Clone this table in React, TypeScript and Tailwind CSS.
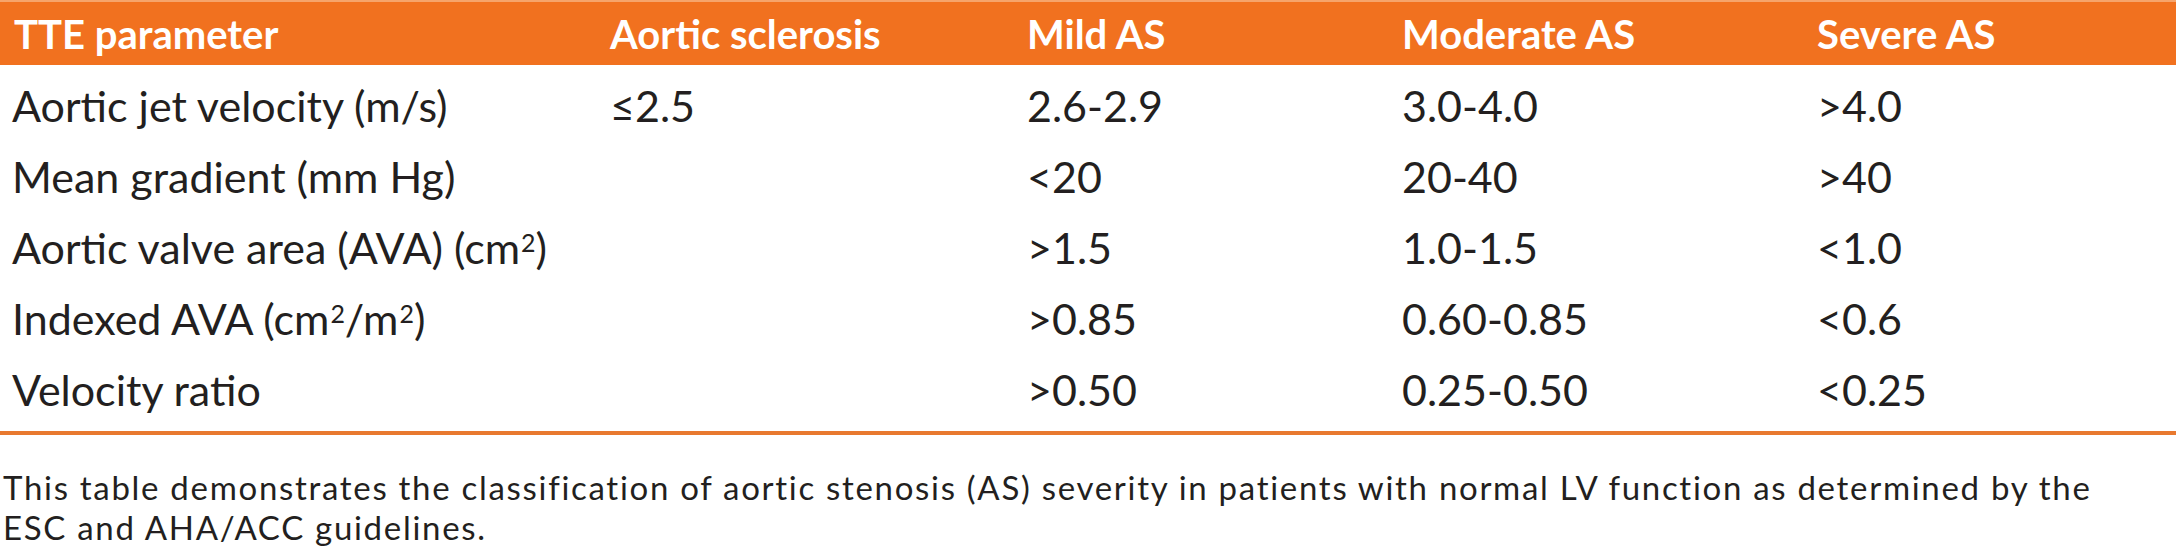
const headers = ["TTE parameter", "Aortic sclerosis", "Mild AS", "Moderate AS", "Severe AS"]

const Sup = ({ children }: { children: React.ReactNode }) => (
  <sup className="text-[0.58em] relative -top-[0.5em] pl-[1px]">{children}</sup>
)

const rows: React.ReactNode[][] = [
  ["Aortic jet velocity (m/s)", "≤2.5", "2.6-2.9", "3.0-4.0", ">4.0"],
  ["Mean gradient (mm Hg)", "", "<20", "20-40", ">40"],
  [<>Aortic valve area (AVA) (cm<Sup>2</Sup>)</>, "", ">1.5", "1.0-1.5", "<1.0"],
  [<>Indexed AVA (cm<Sup>2</Sup>/m<Sup>2</Sup>)</>, "", ">0.85", "0.60-0.85", "<0.6"],
  ["Velocity ratio", "", ">0.50", "0.25-0.50", "<0.25"],
]

// column starts: 0, 610, 1027, 1402, 1817
const gridClass = "grid grid-cols-[610px_417px_375px_415px_359px]"

export default function App() {
  return (
    <div className="w-[2176px] h-[552px] bg-white overflow-hidden text-[#231f20]" style={{ fontFamily: "Lato, 'Noto Sans', sans-serif" }}>
      {/* header band */}
      <div className={`${gridClass} h-[65px] items-center bg-[#f1711f] border-t-2 border-[#f6a46b] text-white font-bold text-[40px] leading-none`}>
        {headers.map((h, i) => (
          <div key={h} className={i === 0 ? "pl-[14px] whitespace-nowrap" : "whitespace-nowrap"}>{h}</div>
        ))}
      </div>

      {/* body rows */}
      <div className="pt-[5px] pb-[6px]">
        {rows.map((row, r) => (
          <div key={r} className={`${gridClass} h-[71px] items-center text-[43px] leading-[71px] font-normal`}>
            {row.map((cell, c) => (
              <div key={c} className={c === 0 ? "pl-[12px] whitespace-nowrap" : "whitespace-nowrap"}>{cell}</div>
            ))}
          </div>
        ))}
      </div>

      <div className="h-[4px] bg-[#e8792f]" />

      <div className="pl-[3px] pt-[32px] text-[33px] leading-[40px] tracking-[1.7px] font-normal">
        <p className="whitespace-nowrap">This table demonstrates the classification of aortic stenosis (AS) severity in patients with normal LV function as determined by the</p>
        <p className="whitespace-nowrap">ESC and AHA/ACC guidelines.</p>
      </div>
    </div>
  )
}
